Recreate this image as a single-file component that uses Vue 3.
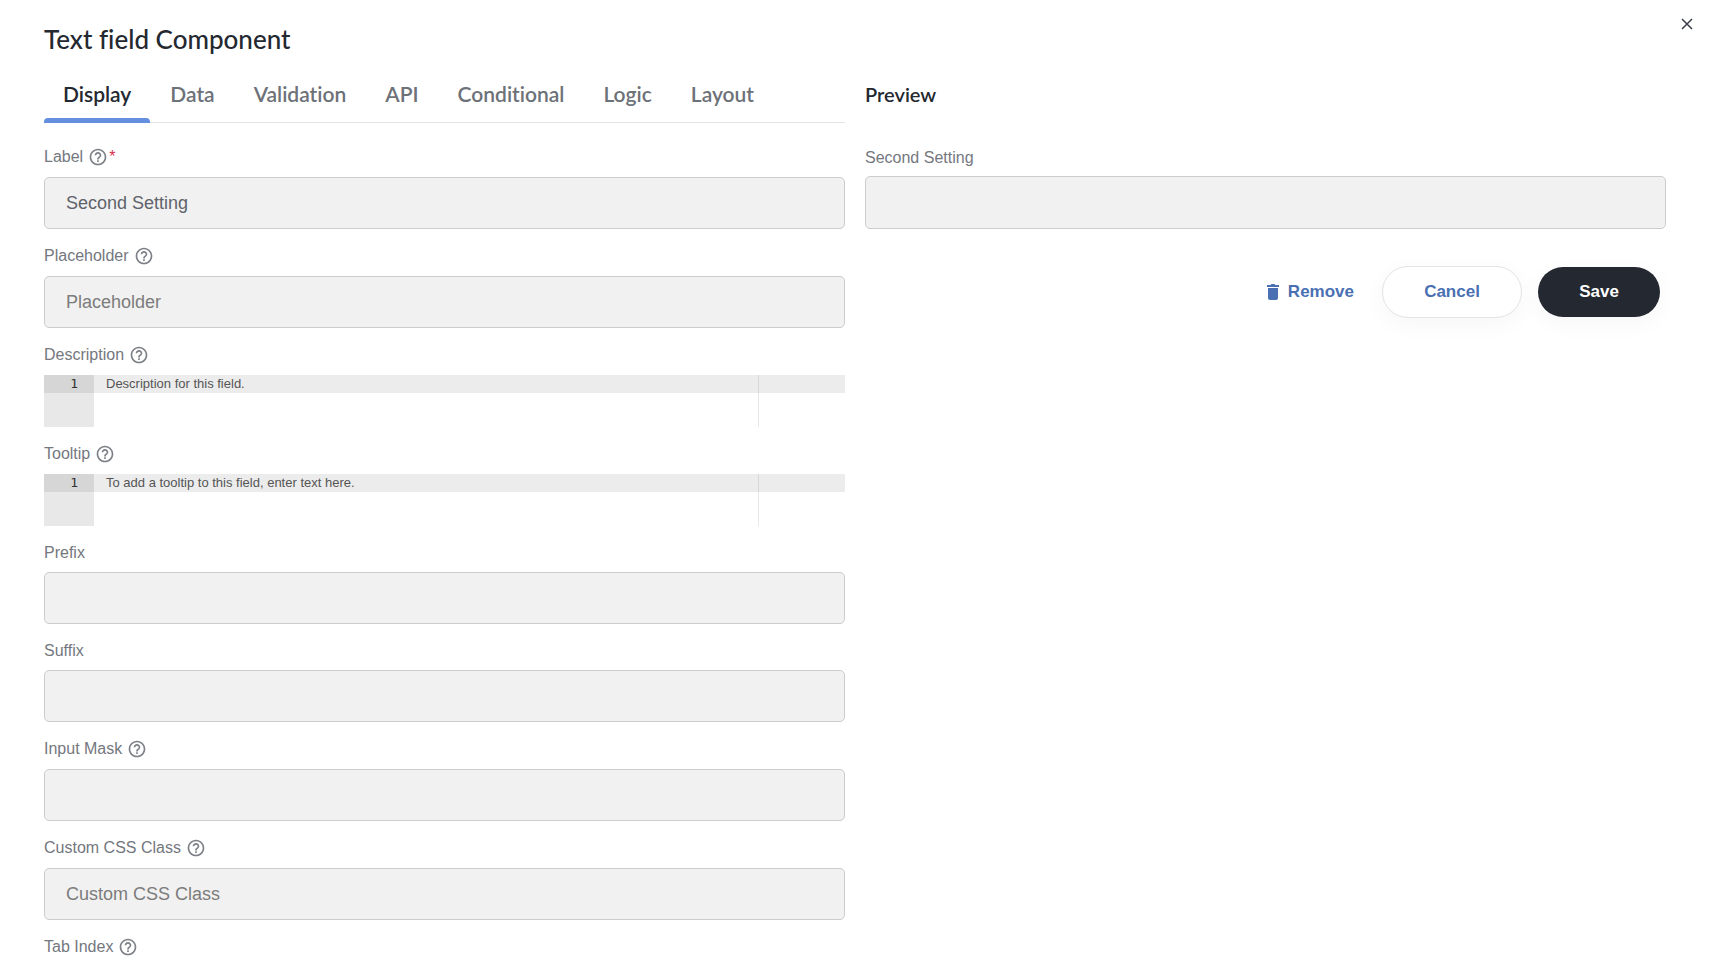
<template>
  <div class="dialog" role="dialog" aria-labelledby="dialog-title">
    <button class="close" type="button" aria-label="Close">
      <svg viewBox="0 0 12 12" width="12" height="12"><path d="M1 1l10 10M11 1L1 11" /></svg>
    </button>

    <h1 id="dialog-title">Text field Component</h1>

    <div class="columns">
      <section class="settings">
        <nav class="tabs">
          <a
            v-for="tab in tabs"
            :key="tab"
            href="#"
            :class="{ active: tab === activeTab }"
            @click.prevent="activeTab = tab"
          >{{ tab }}</a>
        </nav>

        <div v-for="field in fields" :key="field.id" class="field">
          <label :for="field.id" :class="{ 'has-help': field.help }">
            <span>{{ field.label }}</span>
            <svg v-if="field.help" class="help" viewBox="0 0 24 24" width="20" height="20" aria-hidden="true">
              <path d="M11 18h2v-2h-2v2zm1-16C6.48 2 2 6.48 2 12s4.48 10 10 10 10-4.48 10-10S17.52 2 12 2zm0 18c-4.41 0-8-3.59-8-8s3.59-8 8-8 8 3.59 8 8-3.59 8-8 8zm0-14c-2.21 0-4 1.79-4 4h2c0-1.1.9-2 2-2s2 .9 2 2c0 2-3 1.75-3 5h2c0-2.25 3-2.5 3-5 0-2.21-1.79-4-4-4z" />
            </svg>
            <span v-if="field.required" class="required">*</span>
          </label>

          <div v-if="field.editor" class="editor">
            <div class="gutter"><span>1</span></div>
            <textarea :id="field.id" v-model="values[field.id]" :placeholder="field.placeholder" rows="1"></textarea>
          </div>
          <input v-else :id="field.id" v-model="values[field.id]" type="text" :placeholder="field.placeholder">
        </div>
      </section>

      <section class="preview">
        <h2>Preview</h2>
        <div class="field">
          <label for="preview-input">{{ values.label }}</label>
          <input id="preview-input" type="text">
        </div>
        <div class="actions">
          <button class="remove" type="button">
            <svg viewBox="0 0 12 16" width="12" height="16" aria-hidden="true">
              <path d="M1 4h10v10a2 2 0 0 1-2 2H3a2 2 0 0 1-2-2zM0 1h3.500l1-1h3l1 1H12v2H0z" />
            </svg>
            Remove
          </button>
          <button class="cancel" type="button">Cancel</button>
          <button class="save" type="button">Save</button>
        </div>
      </section>
    </div>
  </div>
</template>

<script setup>
import { ref, reactive } from "vue";

const tabs = ["Display", "Data", "Validation", "API", "Conditional", "Logic", "Layout"];
const activeTab = ref("Display");

const fields = [
  { id: "label", label: "Label", help: true, required: true },
  { id: "placeholder", label: "Placeholder", help: true, placeholder: "Placeholder" },
  { id: "description", label: "Description", help: true, editor: true, placeholder: "Description for this field." },
  { id: "tooltip", label: "Tooltip", help: true, editor: true, placeholder: "To add a tooltip to this field, enter text here." },
  { id: "prefix", label: "Prefix" },
  { id: "suffix", label: "Suffix" },
  { id: "inputMask", label: "Input Mask", help: true },
  { id: "customClass", label: "Custom CSS Class", help: true, placeholder: "Custom CSS Class" },
  { id: "tabindex", label: "Tab Index", help: true },
];

const values = reactive({ label: "Second Setting" });
</script>

<style>
body { margin:0; background:#fff; }
</style>

<style scoped>
* { box-sizing:border-box; }
.dialog {
  position:relative; height:100vh; overflow-y:auto; scrollbar-width:none;
  padding:22px 43px 0 44px;
  font-family:"Liberation Sans", Arial, sans-serif; font-size:16px; color:#74777e;
}
.close {
  position:absolute; top:18px; right:16px;
  display:flex; padding:0; border:0; background:none; cursor:pointer;
}
.close svg { fill:none; stroke:#3a3f4a; stroke-width:1.5; }

h1, h2, .tabs { font-family:Lato, sans-serif; font-variant-ligatures:none; }
h1 { margin:0; font-size:26px; line-height:34px; font-weight:500; color:#242830; }
h2 { margin:0; height:67px; padding-top:24px; font-size:20px; line-height:28px; font-weight:600; color:#242830; }

.columns { display:grid; grid-template-columns:1fr 1fr; gap:20px; }
.tabs { display:flex; gap:1px; height:67px; margin-bottom:22px; border-bottom:1px solid #e4e4e5; }
.tabs a {
  height:67px; padding:24px 19px 0;
  font-size:21px; line-height:28px; font-weight:600; color:#6d7178; text-decoration:none;
}
.tabs a.active { color:#242830; }
.tabs a.active::after {
  content:""; display:block; height:5px; margin:10px -19px 0;
  background:#648fde; border-radius:4px 4px 0 0;
}

.field { margin-bottom:15px; }
.field label { display:flex; align-items:center; gap:5px; height:24px; margin-bottom:7px; }
.field label.has-help { margin-bottom:8px; }
.help { fill:#7d8187; }
.required { margin-left:-4px; color:#d9304f; }
.field input {
  display:block; width:100%; height:52px; padding:0 21px;
  border:1px solid #cbcccd; border-radius:5px; background:#f1f1f1;
  font-family:inherit; font-size:18px; color:#5f636b; outline:none;
}
.field input::placeholder { color:#7c7c7c; opacity:1; }

/* active line and print margin are painted behind the textarea */
.editor {
  display:flex; height:52px;
  background:
    linear-gradient(rgba(0,0,0,.09), rgba(0,0,0,.09)) 714px 0 / 1px 100% no-repeat,
    linear-gradient(#ececec, #ececec) 0 0 / 100% 18px no-repeat;
}
.gutter { width:50px; background:#e8e8e8; }
.gutter span {
  display:block; height:18px; padding-right:16px; background:#d6d6d6;
  font-family:"DejaVu Sans Mono", monospace; font-size:13px; line-height:18px; text-align:right; color:#333;
}
.editor textarea {
  flex:1; padding:0 12px; border:0; background:none; resize:none; outline:none;
  font-family:inherit; font-size:13px; line-height:17px; color:#333;
}
.editor textarea::placeholder { color:#555; opacity:1; }

.preview h2 { margin-bottom:22px; }
.preview label { height:25px; margin-bottom:6px; }
.preview input { height:53px; }
.actions { display:flex; justify-content:flex-end; align-items:center; margin-top:37px; padding-right:6px; }
.actions button { border:0; background:none; font-family:inherit; font-size:17px; font-weight:700; cursor:pointer; }
.actions .remove { display:flex; align-items:center; gap:9px; margin-right:28px; padding:0; color:#4a70b3; }
.remove svg { fill:#4a70b3; }
.actions .cancel {
  width:140px; height:52px; margin-right:16px;
  border:1px solid #e4e4e5; border-radius:26px; background:#fff; color:#4a70b3;
  box-shadow:0 6px 24px rgba(0,0,0,.04);
}
.actions .save {
  width:122px; height:50px; border-radius:25px; background:#242830; color:#fff;
  box-shadow:0 6px 24px rgba(0,0,0,.04);
}
</style>
